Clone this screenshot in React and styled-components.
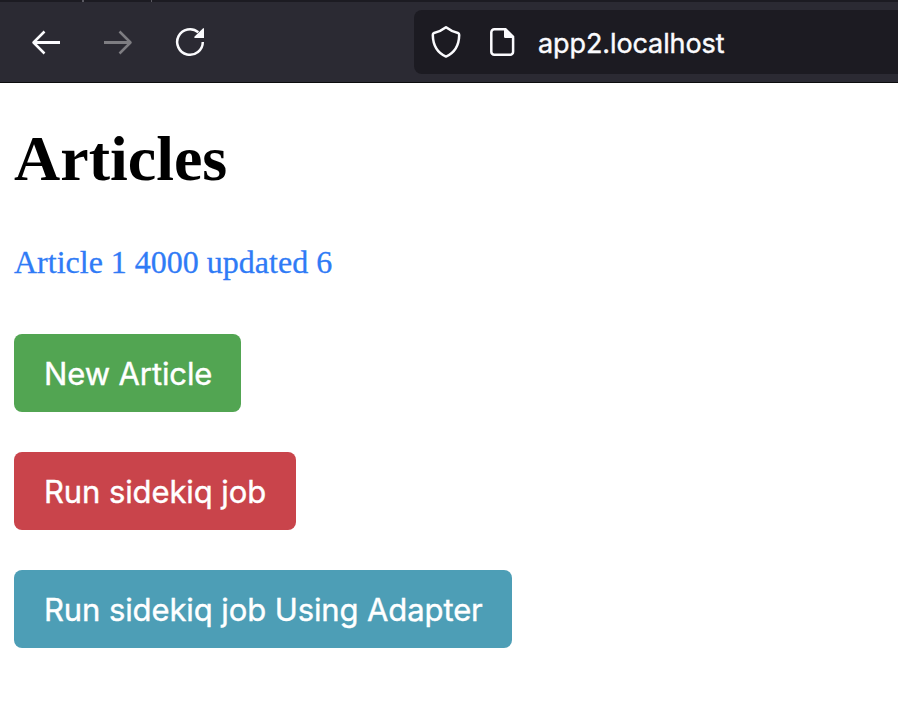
import React from "react";
import styled, { createGlobalStyle } from "styled-components";

const GlobalStyle = createGlobalStyle`
  * { box-sizing: border-box; }
  body { margin: 0; background: #fff; overflow: hidden; }
`;
const Page = styled.div`
  width: 898px;
  height: 726px;
  background: #fff;
  overflow: hidden;
`;
const TabEdges = styled.div`
  height: 2px;
  display: flex;
  gap: 67px;
  padding-left: 82px;
  background: #1c1b22;
`;
const TabEdge = styled.span`
  width: ${(p) => p.$width}px;
  height: 2px;
  background: #5b5a62;
`;
const Toolbar = styled.header`
  height: 81px;
  display: flex;
  align-items: flex-start;
  padding-top: 8px;
  background: #2b2a33;
  border-bottom: 1px solid #0c0c0d;
`;
const Navigation = styled.nav`
  width: 414px;
  height: 64px;
  display: flex;
  align-items: center;
  gap: 36px;
  padding-left: 28px;
`;
const NavButton = styled.button`
  width: 36px;
  height: 36px;
  padding: 0;
  border: 0;
  background: none;
  color: ${(p) => (p.$muted ? "#7e7d82" : "#fbfbfe")};
  svg { display: block; }
`;
const AddressBar = styled.div`
  flex: 1;
  height: 64px;
  display: flex;
  align-items: center;
  padding-left: 14px;
  gap: 20px;
  background: #1c1b22;
  border-radius: 8px 0 0 8px;
  color: #fbfbfe;
`;
const Address = styled.span`
  font: 27px/36px Inter, sans-serif;
  letter-spacing: -0.1px;
  -webkit-text-stroke: 0.4px currentColor;
  margin: 4px 0 0 -2px;
  white-space: nowrap;
`;
const Content = styled.main`
  display: flex;
  flex-direction: column;
  align-items: flex-start;
  padding: 39px 14px;
`;
const Title = styled.h1`
  margin: 0;
  font: bold 64px/74px "Liberation Serif", serif;
  color: #000;
`;
const ArticleLink = styled.a`
  margin: 48px 0 53px;
  font: 32px/37px "Liberation Serif", serif;
  -webkit-text-stroke: 0.3px currentColor;
  color: #2f7bf6;
  text-decoration: none;
`;
const Actions = styled.div`
  display: flex;
  flex-direction: column;
  align-items: flex-start;
  gap: 40px;
`;
const ActionButton = styled.button`
  width: ${(p) => p.$width}px;
  height: 78px;
  padding: 2px 0 0 30px;
  border: 0;
  border-radius: 8px;
  background: ${(p) => p.$color};
  color: #fff;
  font: 31px/48px Inter, sans-serif;
  letter-spacing: -0.1px;
  -webkit-text-stroke: 0.4px currentColor;
  text-align: left;
  white-space: nowrap;
`;

const Icon = ({ children }) => (
  <svg width="36" height="36" viewBox="0 0 36 36" fill="none" stroke="currentColor" strokeWidth="2.5">{children}</svg>
);

export default function App() {
  return (
    <Page>
      <GlobalStyle />
      <TabEdges>
        <TabEdge $width={2} />
        <TabEdge $width={1} />
      </TabEdges>
      <Toolbar>
        <Navigation>
          <NavButton aria-label="Back"><Icon><path d="M32 18.5H6" strokeWidth="3" /><path d="M16.5 7.5 5.5 18.5l11 11" strokeLinejoin="round" /></Icon></NavButton>
          <NavButton aria-label="Forward" $muted><Icon><path d="M4 18.5h26" strokeWidth="3" /><path d="M19.5 7.5l11 11-11 11" strokeLinejoin="round" /></Icon></NavButton>
          <NavButton aria-label="Reload"><Icon><path d="M30.8 18A12.8 12.8 0 1 1 26.3 8.25" /><path d="M32 4.3V14h-9.3l-.6-.9 9-8.8z" fill="currentColor" stroke="none" /></Icon></NavButton>
        </Navigation>
        <AddressBar>
          <Icon><path d="M18 3.3C14.5 6 10.5 8 6 9Q4.7 9.4 4.8 11C5 22 8.8 28.5 18 32.6 27.2 28.5 31 22 31.2 11Q31.3 9.4 30 9C25.5 8 21.5 6 18 3.3z" strokeLinejoin="round" /></Icon>
          <Icon><path d="M20.5 5.2H10.3a3 3 0 0 0-3 3v19.6a3 3 0 0 0 3 3h15.8a3 3 0 0 0 3-3V14" /><path d="M20 4h2l8.3 8.3V14h-9.1a1.2 1.2 0 0 1-1.2-1.2z" fill="currentColor" stroke="none" /></Icon>
          <Address>app2.localhost</Address>
        </AddressBar>
      </Toolbar>
      <Content>
        <Title>Articles</Title>
        <ArticleLink>Article 1 4000 updated 6</ArticleLink>
        <Actions>
          <ActionButton $width={227} $color="#52a552">New Article</ActionButton>
          <ActionButton $width={282} $color="#c9444b">Run sidekiq job</ActionButton>
          <ActionButton $width={498} $color="#4d9eb6">Run sidekiq job Using Adapter</ActionButton>
        </Actions>
      </Content>
    </Page>
  );
}
